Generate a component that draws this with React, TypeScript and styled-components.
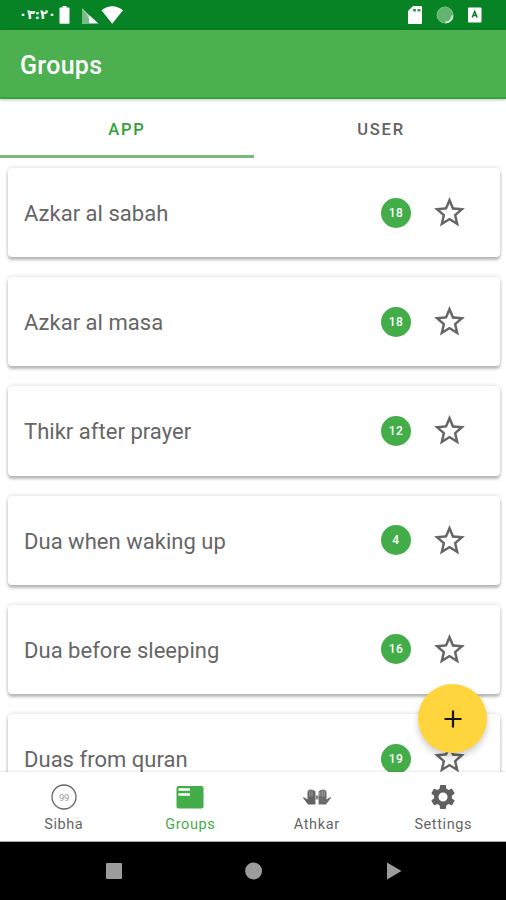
import React from "react";
import styled, { createGlobalStyle } from "styled-components";

const GlobalStyle = createGlobalStyle`
  * { box-sizing: border-box; }
  body { margin: 0; background: #fff; font-family: Roboto, "Liberation Sans", sans-serif; }
`;

const Screen = styled.div`
  position: relative;
  width: 506px;
  height: 900px;
  display: flex;
  flex-direction: column;
  overflow: hidden;
  background: #fff;
`;

const StatusBar = styled.div`
  flex: none;
  height: 30px;
  padding: 0 23px 0 19px;
  display: flex;
  align-items: center;
  justify-content: space-between;
  background: #078224;
`;

const StatusGroup = styled.div<{ $gap: number }>`
  display: flex;
  align-items: center;
  gap: ${(p) => p.$gap}px;
`;

const Clock = styled.span`
  width: 33px;
  font: 700 13px/20px "DejaVu Sans", sans-serif;
  letter-spacing: -2.7px;
  white-space: nowrap;
  color: #fff;
`;

const AppBar = styled.header`
  flex: none;
  position: relative;
  z-index: 1;
  height: 69px;
  padding: 4px 20px 0;
  display: flex;
  align-items: center;
  background: #4caf50;
  border-bottom: 2px solid #35a33b;
  box-shadow: 0 1px 3px rgba(0, 0, 0, 0.25);
`;

const Title = styled.h1`
  margin: 0;
  font-size: 25px;
  font-weight: 500;
  letter-spacing: 0.3px;
  color: #fff;
`;

const Tabs = styled.div`
  flex: none;
  height: 59px;
  display: flex;
`;

const Tab = styled.div<{ $active?: boolean }>`
  flex: none;
  width: 254px;
  display: flex;
  align-items: center;
  justify-content: center;
  padding: 4px 0 0;
  border-bottom: 3px solid ${(p) => (p.$active ? "#78b97c" : "transparent")};
  color: ${(p) => (p.$active ? "#2fa236" : "#626262")};
  font-size: 16.5px;
  font-weight: 500;
  letter-spacing: 1.8px;
`;

const List = styled.main`
  flex: none;
  height: 614px;
  padding: 10px 6px 0 8px;
  display: flex;
  flex-direction: column;
  gap: 20px;
  overflow: hidden;
`;

const Card = styled.div`
  flex: none;
  height: 89.2px;
  padding: 0 32px 0 16px;
  display: flex;
  align-items: center;
  border-radius: 4px;
  background: #fff;
  box-shadow: 0 3px 3px rgba(0, 0, 0, 0.24), 0 0 4px rgba(0, 0, 0, 0.16);
`;

const Label = styled.span`
  flex: 1;
  padding-top: 2px;
  font-size: 22px;
  letter-spacing: 0.03px;
  color: #666;
`;

const Count = styled.span`
  width: 30px;
  height: 30px;
  margin-right: 20px;
  border-radius: 50%;
  display: flex;
  align-items: center;
  justify-content: center;
  background: #43ae49;
  color: #fff;
  font-size: 12px;
  font-weight: 500;
  letter-spacing: 0.5px;
`;

const Fab = styled.button`
  position: absolute;
  z-index: 2;
  left: 418px;
  top: 684px;
  width: 69px;
  height: 69px;
  border: 0;
  padding: 0;
  border-radius: 50%;
  display: flex;
  align-items: center;
  justify-content: center;
  background: #ffd53d;
  box-shadow: 0 4px 7px rgba(0, 0, 0, 0.2);
`;

const BottomNav = styled.nav`
  flex: none;
  position: relative;
  height: 70px;
  display: grid;
  grid-template-columns: repeat(4, 1fr);
  background: #fff;
  border-bottom: 1px solid #a5a5a5;
  box-shadow: 0 -1px 2px rgba(0, 0, 0, 0.09);
`;

const NavItem = styled.div<{ $active?: boolean }>`
  display: flex;
  flex-direction: column;
  align-items: center;
  padding: 10px 0 0 1px;
  color: ${(p) => (p.$active ? "#43ae49" : "#666")};
  font-size: 14.5px;
  line-height: 20px;
  letter-spacing: 0.6px;
  svg { margin-bottom: 3px; }
`;

const SystemBar = styled.div`
  flex: none;
  height: 58px;
  display: flex;
  justify-content: space-between;
  align-items: center;
  padding: 0 104px 0 105px;
  background: #000;
`;

const groups = [
  { name: "Azkar al sabah", count: 18 },
  { name: "Azkar al masa", count: 18 },
  { name: "Thikr after prayer", count: 12 },
  { name: "Dua when waking up", count: 4 },
  { name: "Dua before sleeping", count: 16 },
  { name: "Duas from quran", count: 19 },
];

const Star = () => (
  <svg width="37" height="37" viewBox="0 0 24 24" fill="#666">
    <path d="M22 9.24l-7.19-.62L12 2 9.19 8.63 2 9.24l5.46 4.73L5.82 21 12 17.27 18.18 21l-1.63-7.03L22 9.24zM12 15.4l-3.76 2.27 1-4.28-3.32-2.88 4.38-.38L12 6.1l1.71 4.04 4.38.38-3.32 2.88 1 4.28L12 15.4z" />
  </svg>
);

const LeftStatusIcons = () => (
  <svg width="66" height="20" viewBox="0 0 66 20" fill="#fff">
    <path d="M5.500 1h4v1.500h2.200q.8 0 .8.800v14.700q0 .8-.8.800H3.300q-.8 0-.8-.800V3.300q0-.8.800-.8h2.200z" />
    <path d="M25 3v16h7V10z" opacity=".45" />
    <path d="M32 10L41.500 18.500H32z" />
    <path d="M25 3L32 10v4z" opacity=".35" />
    <path d="M44.500 5.200Q55.200-2.500 66 5.200L55.200 18.800z" />
  </svg>
);

const SdCard = () => (
  <svg width="16" height="20" viewBox="0 0 16 20">
    <path d="M6 1h8q1 0 1 1v16q0 1-1 1H2q-1 0-1-1V6z" fill="#fff" />
    <path d="M6 4h3v2.500H6zM10.500 4h3v2.500h-3z" fill="#3d9c50" />
  </svg>
);

const SyncCircle = () => (
  <svg width="18" height="20" viewBox="0 0 18 20">
    <circle cx="9" cy="10" r="8" fill="#62b46e" stroke="#7cc086" />
    <path d="M16.500 10.500Q16 17 9.500 17.500" fill="none" stroke="#d5edd7" strokeWidth="2" />
  </svg>
);

const KeyboardBadge = () => (
  <svg width="16" height="20" viewBox="0 0 16 20">
    <rect x="1" y="2.500" width="13.500" height="15" rx="1" fill="#fff" />
    <path d="M5.200 12.500L7.700 6.500 10.200 12.500M6 10.500h3.500" fill="none" stroke="#078224" strokeWidth="1.500" />
  </svg>
);

const SibhaIcon = () => (
  <svg width="30" height="30" viewBox="0 0 30 30">
    <circle cx="15" cy="15" r="12" fill="none" stroke="#666" strokeWidth="1.300" />
    <text x="15" y="18.500" textAnchor="middle" fontSize="9.500" letterSpacing="-.3" fill="#999">99</text>
  </svg>
);

const GroupsIcon = () => (
  <svg width="30" height="30" viewBox="0 0 30 30">
    <rect x="1.500" y="4" width="27" height="22.500" rx="2" fill="#43ae49" />
    <path d="M3.500 7.500H15M3.500 12.500H15" stroke="#fff" strokeWidth="2.400" />
  </svg>
);

const HandsIcon = () => (
  <svg width="30" height="30" viewBox="0 0 30 30">
    <path d="M.8 15.500q1.200-.7 2.300.4l2.400 1.500V10q0-1.300 1-1.300V8q.8-1 1.700 0 1-1 2 0 1-.7 1.700.5 1.500 0 1.500 1.500v12.500H6z" fill="#626262" />
    <path d="M29.200 15.500q-1.200-.7-2.300.4l-2.400 1.500V10q0-1.300-1-1.300V8q-.8-1-1.700 0-1-1-2 0-1-.7-1.700.5-1.500 0-1.500 1.500v12.500H24z" fill="#6c6c6c" />
    <path d="M7.800 8.500v6M10 8.500v6M22.200 8.500v6M20 8.500v6M17.800 10v4" stroke="#bbb" strokeWidth=".7" />
    <path d="M13.500 13.500h3v4h-3z" fill="#888" />
  </svg>
);

const GearIcon = () => (
  <svg width="30" height="30" viewBox="-.6 -.6 25.200 25.200" fill="#606060">
    <path fillRule="evenodd" d="M19.430 12.980c.04-.32.070-.64.070-.98s-.03-.66-.07-.98l2.110-1.650c.19-.15.24-.42.120-.64l-2-3.460c-.12-.22-.39-.3-.61-.22l-2.490 1c-.52-.4-1.080-.73-1.690-.98l-.38-2.650C14.460 2.180 14.250 2 14 2h-4c-.25 0-.46.180-.49.420l-.38 2.650c-.61.250-1.170.590-1.690.980l-2.490-1c-.23-.09-.49 0-.61.220l-2 3.460c-.13.220-.07.490.12.640l2.110 1.650c-.04.320-.07.650-.07.980s.03.660.070.980l-2.110 1.650c-.19.150-.24.420-.12.640l2 3.460c.12.220.39.300.61.220l2.490-1c.52.400 1.080.730 1.690.980l.38 2.650c.03.240.24.420.49.420h4c.25 0 .46-.18.490-.42l.38-2.650c.61-.25 1.170-.59 1.690-.98l2.490 1c.23.090.49 0 .61-.22l2-3.460c.12-.22.070-.49-.12-.64zM12 15.800a3.800 3.800 0 1 1 0-7.600 3.800 3.800 0 0 1 0 7.600z" />
  </svg>
);

export default function App() {
  return (
    <>
      <GlobalStyle />
      <Screen>
        <StatusBar>
          <StatusGroup $gap={5}>
            <Clock>٠٣:٢٠</Clock>
            <LeftStatusIcons />
          </StatusGroup>
          <StatusGroup $gap={13}>
            <SdCard />
            <SyncCircle />
            <KeyboardBadge />
          </StatusGroup>
        </StatusBar>
        <AppBar>
          <Title>Groups</Title>
        </AppBar>
        <Tabs>
          <Tab $active>APP</Tab>
          <Tab>USER</Tab>
        </Tabs>
        <List>
          {groups.map((g) => (
            <Card key={g.name}>
              <Label>{g.name}</Label>
              <Count>{g.count}</Count>
              <Star />
            </Card>
          ))}
        </List>
        <BottomNav>
          <NavItem><SibhaIcon />Sibha</NavItem>
          <NavItem $active><GroupsIcon />Groups</NavItem>
          <NavItem><HandsIcon />Athkar</NavItem>
          <NavItem><GearIcon />Settings</NavItem>
        </BottomNav>
        <SystemBar>
          <svg width="18" height="18"><rect x="1" y="1" width="16" height="16" rx="1" fill="#9c9c9c" /></svg>
          <svg width="20" height="18"><circle cx="8.600" cy="9" r="8.500" fill="#9c9c9c" /></svg>
          <svg width="16" height="18"><path d="M1 .5L15.500 9 1 17.500z" fill="#9c9c9c" /></svg>
        </SystemBar>
        <Fab aria-label="Add group">
          <svg width="20" height="20" viewBox="0 0 20 20"><path d="M10 1.500v17M1.500 10h17" stroke="#161616" strokeWidth="2.200" /></svg>
        </Fab>
      </Screen>
    </>
  );
}
